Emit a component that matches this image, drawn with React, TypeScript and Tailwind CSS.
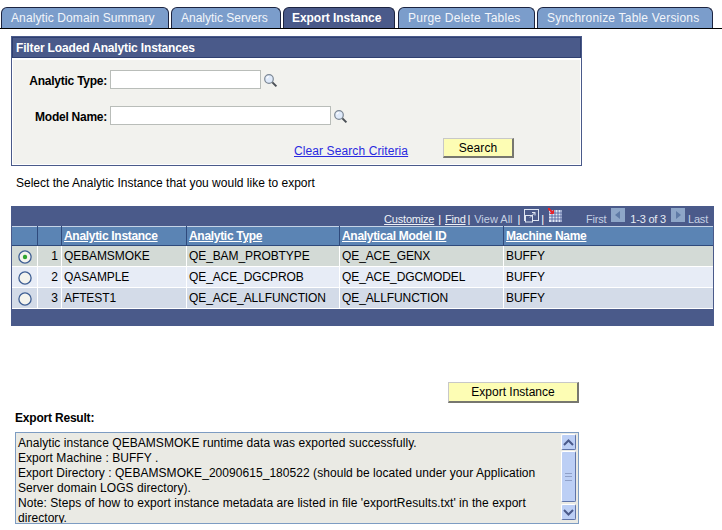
const sans = "font-['Liberation_Sans',Arial,sans-serif]";

function Tab({ label, w, active, ml, track }: { label: string; w: string; active?: boolean; ml: string; track: string }) {
  return (
    <div
      className={`${w} ${ml} ${track} h-[21px] flex items-center ${active ? "pl-[8px]" : "pl-[9px]"} rounded-t-[6px] border border-b-0 border-[#1c2440] text-[12px] ${
        active ? "bg-[#4a5a8a] text-white font-bold" : "bg-[#7b9dcb] text-[#f2f5fa]"
      }`}
    >
      {label}
    </div>
  );
}

function Lens() {
  return (
    <svg width="15" height="15" viewBox="0 0 15 15" className="shrink-0 mt-[2px]">
      <circle cx="6" cy="6" r="4.3" fill="#dfeafa" stroke="#7c8794" strokeWidth="1.2" />
      <path d="M3.8 5.5 A2.5 2.5 0 0 1 6 3.5" stroke="#ffffff" fill="none" strokeWidth="1.2" />
      <path d="M9.4 9.4 L13.4 13.4" stroke="#4a4f55" strokeWidth="2" />
    </svg>
  );
}

function Radio({ on }: { on?: boolean }) {
  return (
    <svg width="14" height="14" viewBox="0 0 14 14" className="ml-[1px] mt-[1px]">
      <circle cx="7" cy="7" r="6.1" fill="#f4f4ee" stroke="#3f5f94" strokeWidth="1.3" />
      {on && <circle cx="7" cy="7" r="2.2" fill="#2fa52f" />}
    </svg>
  );
}

function YellowButton({ label, w, h, track }: { label: string; w: string; h: string; track: string }) {
  return (
    <div
      className={`${w} ${h} ${track} flex items-center justify-center bg-[#fdfdb4] border-t border-l border-dotted border-t-[#c8c8c8] border-l-[#c8c8c8] border-r-2 border-b-2 border-r-[#77776f] border-b-[#77776f] border-solid text-[12px] text-black`}
    >
      {label}
    </div>
  );
}

const headers = ["Analytic Instance", "Analytic Type", "Analytical Model ID", "Machine Name"];
const rows = [
  { n: 1, a: "QEBAMSMOKE", b: "QE_BAM_PROBTYPE", c: "QE_ACE_GENX", d: "BUFFY", bg: "bg-[#d3dad6]", on: true },
  { n: 2, a: "QASAMPLE", b: "QE_ACE_DGCPROB", c: "QE_ACE_DGCMODEL", d: "BUFFY", bg: "bg-[#e7ecf6]", on: false },
  { n: 3, a: "AFTEST1", b: "QE_ACE_ALLFUNCTION", c: "QE_ALLFUNCTION", d: "BUFFY", bg: "bg-[#d3dbe8]", on: false },
];
const grid = "grid grid-cols-[25px_23px_124px_152px_163px_209px] gap-x-[1px]";

function ScrollBtn({ up }: { up?: boolean }) {
  return (
    <div className="h-[16px] w-[15px] bg-[#bccff5] border border-t-white border-l-white border-b-[#5f74a8] border-r-[#5f74a8] rounded-[2px] flex items-center justify-center">
      <svg width="11" height="7" viewBox="0 0 11 7">
        <path d={up ? "M1 6 L5.5 1.5 L10 6" : "M1 1 L5.5 5.5 L10 1"} fill="none" stroke="#4a5a8a" strokeWidth="2" />
      </svg>
    </div>
  );
}

export default function App() {
  return (
    <div className={`${sans} w-[722px] h-[530px] overflow-hidden bg-white pt-[7px] text-[12px] text-black`}>
      {/* Tabs */}
      <div className="flex h-[22px] border-b border-black pl-[1px]">
        <Tab label="Analytic Domain Summary" w="w-[168px]" ml="ml-0" track="tracking-[0.1px]" />
        <Tab label="Analytic Servers" w="w-[110px]" ml="ml-[2px]" track="tracking-[0px]" />
        <Tab label="Export Instance" w="w-[112px]" active ml="ml-[2px]" track="tracking-[-0.05px]" />
        <Tab label="Purge Delete Tables" w="w-[137px]" ml="ml-[3px]" track="tracking-[0.25px]" />
        <Tab label="Synchronize Table Versions" w="w-[176px]" ml="ml-[2px]" track="tracking-[0.2px]" />
      </div>

      {/* Filter */}
      <div className="ml-[11px] mt-[7px] w-[571px] h-[130px] border border-[#4a5a8a] bg-white">
        <div className="h-[21px] bg-[#4a5a8a] border border-[#2f3f70] text-white font-bold flex items-center pl-[3px] text-[12px] tracking-[-0.15px]">
          Filter Loaded Analytic Instances
        </div>
        <div className="mx-px mt-[2px] h-[104px] bg-[#f2f2ee]">
          <div className="pt-[10px] flex items-center h-[29px]">
            <div className="w-[96px] text-right font-bold pr-[2px] pt-[3px] tracking-[-0.25px]">Analytic Type:</div>
            <div className="ml-[1px] w-[151px] h-[19px] bg-white border border-[#b9bdb9]" />
            <div className="ml-[2px]"><Lens /></div>
          </div>
          <div className="mt-[17px] flex items-center h-[19px]">
            <div className="w-[96px] text-right font-bold pr-[2px] pt-[3px] tracking-[-0.25px]">Model Name:</div>
            <div className="ml-[1px] w-[221px] h-[19px] bg-white border border-[#b9bdb9]" />
            <div className="ml-[2px]"><Lens /></div>
          </div>
          <div className="mt-[13px] flex items-start">
            <div className="ml-[281px] w-[149px] mt-[6px] leading-[14px]">
              <a className="text-[#2a2ae0] underline tracking-[0.1px]">Clear Search Criteria</a>
            </div>
            <YellowButton label="Search" w="w-[71px]" h="h-[20px]" track="tracking-[0.1px]" />
          </div>
        </div>
      </div>

      <div className="ml-[16px] mt-[10px] h-[14px] leading-[14px]">Select the Analytic Instance that you would like to export</div>

      {/* Grid */}
      <div className="ml-[11px] mt-[16px] w-[703px] h-[120px] bg-[#4a5a8a] flex flex-col">
        <div className="h-[20px] flex items-end justify-end pr-[6px] text-[11px] text-[#c5d0e4] leading-[13px] tracking-[-0.2px]">
          <span className="underline text-[#eef1f7]">Customize</span>
          <span className="ml-[4px] mr-[4px] text-white">|</span>
          <span className="underline text-[#eef1f7]">Find</span>
          <span className="ml-[2px] mr-[4px] text-white">|</span>
          <span className="tracking-[0px]">View All</span>
          <span className="ml-[5px] mr-[4px] text-white">|</span>
          <svg width="15" height="14" viewBox="0 0 15 14" className="mb-[3px]">
            <rect x="0.5" y="0.5" width="14" height="11" fill="none" stroke="#dfe6f2" />
            <rect x="1.5" y="6.5" width="7" height="6.5" fill="#4a5a8a" stroke="#dfe6f2" />
            <path d="M6 8.5 L11 3.5 M8 3.5 H11 V6.5" fill="none" stroke="#dfe6f2" />
          </svg>
          <span className="ml-[2px] mr-[4px] text-white">|</span>
          <svg width="14" height="14" viewBox="0 0 14 14" className="mb-[4px] mr-[24px]">
            <rect x="1" y="2" width="13" height="12" fill="#dfe6f2" />
            <path d="M1 5 H14 M1 8 H14 M1 11 H14 M4 2 V14 M7 2 V14 M10 2 V14 M13 2 V14" stroke="#5568a0" strokeWidth="0.9" />
            <path d="M0 0 L5 5" stroke="#e8222a" strokeWidth="2" />
            <path d="M5.5 2 V5.5 H2" fill="#e8222a" stroke="#e8222a" />
          </svg>
          <span className="mr-[5px]">First</span>
          <span className="w-[14px] h-[14px] bg-[#8ea6c8] mb-[4px] mr-[5px] flex items-center justify-center">
            <svg width="6" height="8" viewBox="0 0 6 8"><path d="M5 0 L0 4 L5 8 Z" fill="#5f7aa6" /></svg>
          </span>
          <span className="text-[#e6ebf4] mr-[5px]">1-3 of 3</span>
          <span className="w-[14px] h-[14px] bg-[#8ea6c8] mb-[4px] mr-[3px] flex items-center justify-center">
            <svg width="6" height="8" viewBox="0 0 6 8"><path d="M1 0 L6 4 L1 8 Z" fill="#5f7aa6" /></svg>
          </span>
          <span>Last</span>
        </div>
        <div className="mx-px bg-white flex-none">
          <div className={`${grid} h-[20px] bg-[#2f4a7c]`}>
            {["", "", ...headers].map((h, i) => (
              <div key={i} className="bg-[#5b84b4] border-t border-[#c5d3e6] h-[19px] flex items-center pl-[2px] font-bold text-white underline tracking-[-0.3px]">
                {h}
              </div>
            ))}
          </div>
          {rows.map((r) => (
            <div key={r.n} className={`${grid} h-[21px] pb-px`}>
              <div className={`${r.bg} flex items-center justify-center`}><Radio on={r.on} /></div>
              <div className={`${r.bg} flex items-center justify-end pr-[3px]`}>{r.n}</div>
              {[r.a, r.b, r.c, r.d].map((t, i) => (
                <div key={i} className={`${r.bg} flex items-center pl-[2px] tracking-[-0.1px]`}>{t}</div>
              ))}
            </div>
          ))}
        </div>
      </div>

      {/* Export button */}
      <div className="ml-[448px] mt-[56px]">
        <YellowButton label="Export Instance" w="w-[131px]" h="h-[21px]" track="tracking-[0px]" />
      </div>

      <div className="ml-[15px] mt-[8px] font-bold h-[14px] leading-[14px] tracking-[-0.2px]">Export Result:</div>

      {/* Result box */}
      <div className="ml-[15px] mt-[7px] w-[564px] h-[92px] border border-[#7d9cc2] bg-[#eaeae4] flex overflow-hidden">
        <div className="w-[545px] shrink-0 pl-[2px] pt-[3px] leading-[15px] tracking-[0.05px] text-[12px]">
          Analytic instance QEBAMSMOKE runtime data was exported successfully.<br />
          Export Machine : BUFFY .<br />
          Export Directory : QEBAMSMOKE_20090615_180522 (should be located under your Application<br />
          Server domain LOGS directory).<br />
          Note: Steps of how to export instance metadata are listed in file 'exportResults.txt' in the export<br />
          directory.
        </div>
        <div className="w-[15px] pt-[1px] flex flex-col">
          <ScrollBtn up />
          <div className="mt-[1px] h-[51px] bg-[#bccff5] border border-t-white border-l-white border-b-[#5f74a8] border-r-[#5f74a8] rounded-[2px] flex items-center justify-center">
            <div className="w-[7px] h-[8px] border-y border-[#8fa0c8] flex flex-col justify-center">
              <div className="h-px bg-[#8fa0c8]" />
            </div>
          </div>
          <div className="mt-[2px]"><ScrollBtn /></div>
        </div>
      </div>
    </div>
  );
}
